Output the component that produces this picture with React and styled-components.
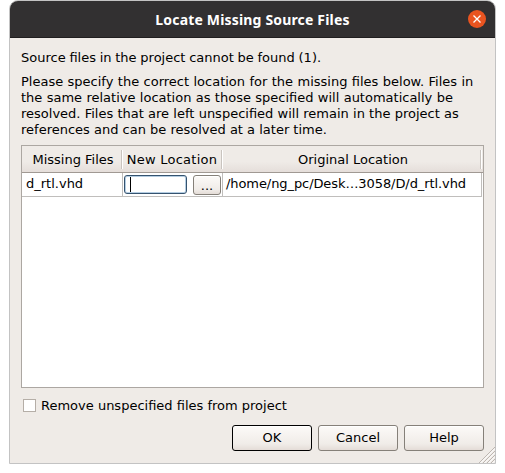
import React from "react";
import styled, { createGlobalStyle } from "styled-components";

const GlobalStyle = createGlobalStyle`
  * { box-sizing: border-box; }
  body {
    margin: 0;
    background: #fff;
    color: #000;
    font: 13px/16px "DejaVu Sans", sans-serif;
    overflow: hidden;
  }
`;

const Dialog = styled.main`
  position: relative;
  display: flex;
  flex-direction: column;
  width: 487px;
  height: 464px;
  margin-left: 9px;
  border: 1px solid #c3c3c3;
  border-radius: 9px 9px 0 0;
  background: #efebe7;
  overflow: hidden;
`;

const TitleBar = styled.header`
  display: grid;
  grid-template-columns: 36px 1fr 36px;
  align-items: center;
  height: 37px;
  flex: none;
  background: #323031;
  border-bottom: 1px solid #201e1f;
`;

const Title = styled.h1`
  grid-column: 2;
  margin: 0;
  padding-top: 1px;
  color: #fff;
  text-align: center;
  white-space: nowrap;
  font: bold 14px/18px "Noto Sans", sans-serif;
  letter-spacing: 0.17px;
`;

const CloseButton = styled.button`
  display: flex;
  width: 18px;
  height: 18px;
  margin-left: 9px;
  padding: 0;
  border: 0;
  border-radius: 50%;
  background: #e95420;
`;

const Content = styled.section`
  display: flex;
  flex-direction: column;
  padding: 12px 11px 12px;
`;

const Message = styled.p`
  margin: 0 0 8px;
  white-space: nowrap;

  & + & { margin-bottom: 7px; }
`;

const Line = styled.span`
  display: block;
  word-spacing: ${({ $gap }) => $gap || 0}px;
`;

const Table = styled.div`
  width: 463px;
  height: 243px;
  border: 1px solid #aca7a2;
  background: #fff;
`;

const TableHeader = styled.div`
  display: grid;
  grid-template-columns: 100px 100px 259px 1fr;
  height: 27px;
  padding: 4px 0 3px;
  border-bottom: 1px solid #a09993;
  background: linear-gradient(#efebe7 60%, #e5deda);
`;

const HeaderCell = styled.div`
  padding-left: ${({ $inset }) => $inset || 0}px;
  border-right: 1px solid #c9c4bf;
  box-shadow: 1px 0 #fff;
  text-align: center;
  line-height: 19px;
  letter-spacing: ${({ $tracking }) => $tracking ? `${$tracking}px` : "normal"};
`;

const TableRow = styled.div`
  display: grid;
  grid-template-columns: 101px 100px 259px;
  width: 460px;
  height: 24px;
  border-bottom: 1px solid #c0bebc;
`;

const Cell = styled.div`
  display: flex;
  align-items: flex-start;
  justify-content: space-between;
  padding: ${({ $editor }) => ($editor ? "2px 1px" : "3px 0 3px")};
  padding-left: ${({ $inset }) => $inset || 1}px;
  border-right: 1px solid #c0bebc;
  white-space: nowrap;
  letter-spacing: ${({ $tracking }) => $tracking ? `${$tracking}px` : "normal"};
`;

const LocationField = styled.div`
  width: 63px;
  height: 19px;
  padding: 1px 5px;
  border: 1px solid #35536f;
  border-radius: 3px;
  background: #fff;
  box-shadow: inset 0 0 0 1px #b4cde2;
`;

const Caret = styled.div`
  width: 1px;
  height: 15px;
  background: #000;
`;

const Button = styled.button`
  width: ${({ $small }) => ($small ? "28px" : "80px")};
  height: ${({ $small }) => ($small ? "20px" : "26px")};
  padding: ${({ $small }) => ($small ? "1px 0 0" : "0 0 1px")};
  border: 1px solid ${({ $primary }) => ($primary ? "#000" : "#858079")};
  border-radius: 3px;
  background: linear-gradient(#fcfaf8, #f0ece8 75%, #e4dcd7);
  box-shadow: inset 0 1px #fff;
  color: #000;
  font: inherit;
`;

const Option = styled.label`
  display: flex;
  align-items: center;
  gap: 5px;
  margin: 10px 0 11px 2px;
`;

const Checkbox = styled.span`
  width: 13px;
  height: 13px;
  margin-top: -1px;
  border: 1px solid #b5aea7;
  background: #fff;
`;

const Actions = styled.footer`
  display: flex;
  justify-content: flex-end;
  gap: 6px;
`;

const ResizeGrip = styled.svg`
  position: absolute;
  right: 0;
  bottom: 0;
  width: 17px;
  height: 17px;
`;

export default function App() {
  return (
    <>
      <GlobalStyle />
      <Dialog>
        <TitleBar>
          <Title>Locate Missing Source Files</Title>
          <CloseButton aria-label="Close">
            <svg width="18" height="18" viewBox="0 0 18 18">
              <path d="M5.5 5.5L12.5 12.5M12.5 5.5L5.5 12.5" stroke="#fff" strokeWidth="1.3" />
            </svg>
          </CloseButton>
        </TitleBar>
        <Content>
          <Message>
            <Line $gap={-0.4}>Source files in the project cannot be found (1).</Line>
          </Message>
          <Message>
            <Line $gap={0.27}>Please specify the correct location for the missing files below. Files in</Line>
            <Line $gap={0.22}>the same relative location as those specified will automatically be</Line>
            <Line $gap={0.1}>resolved. Files that are left unspecified will remain in the project as</Line>
            <Line>references and can be resolved at a later time.</Line>
          </Message>
          <Table>
            <TableHeader>
              <HeaderCell $inset={3}>Missing Files</HeaderCell>
              <HeaderCell $inset={1} $tracking={0.25}>New Location</HeaderCell>
              <HeaderCell $inset={4}>Original Location</HeaderCell>
            </TableHeader>
            <TableRow>
              <Cell $inset={4}>d_rtl.vhd</Cell>
              <Cell $editor>
                <LocationField><Caret /></LocationField>
                <Button $small>...</Button>
              </Cell>
              <Cell $inset={3} $tracking={-0.08}>/home/ng_pc/Desk…3058/D/d_rtl.vhd</Cell>
            </TableRow>
          </Table>
          <Option>
            <Checkbox />
            Remove unspecified files from project
          </Option>
          <Actions>
            <Button $primary>OK</Button>
            <Button>Cancel</Button>
            <Button>Help</Button>
          </Actions>
        </Content>
        <ResizeGrip viewBox="0 0 17 17">
          <path d="M1 17L17 1M5 17L17 5M9 17L17 9M13 17L17 13" stroke="#bdb6b0" />
          <path d="M2.5 17L17 2.5M6.5 17L17 6.5M10.5 17L17 10.5M14.5 17L17 14.5" stroke="#fff" />
        </ResizeGrip>
      </Dialog>
    </>
  );
}
